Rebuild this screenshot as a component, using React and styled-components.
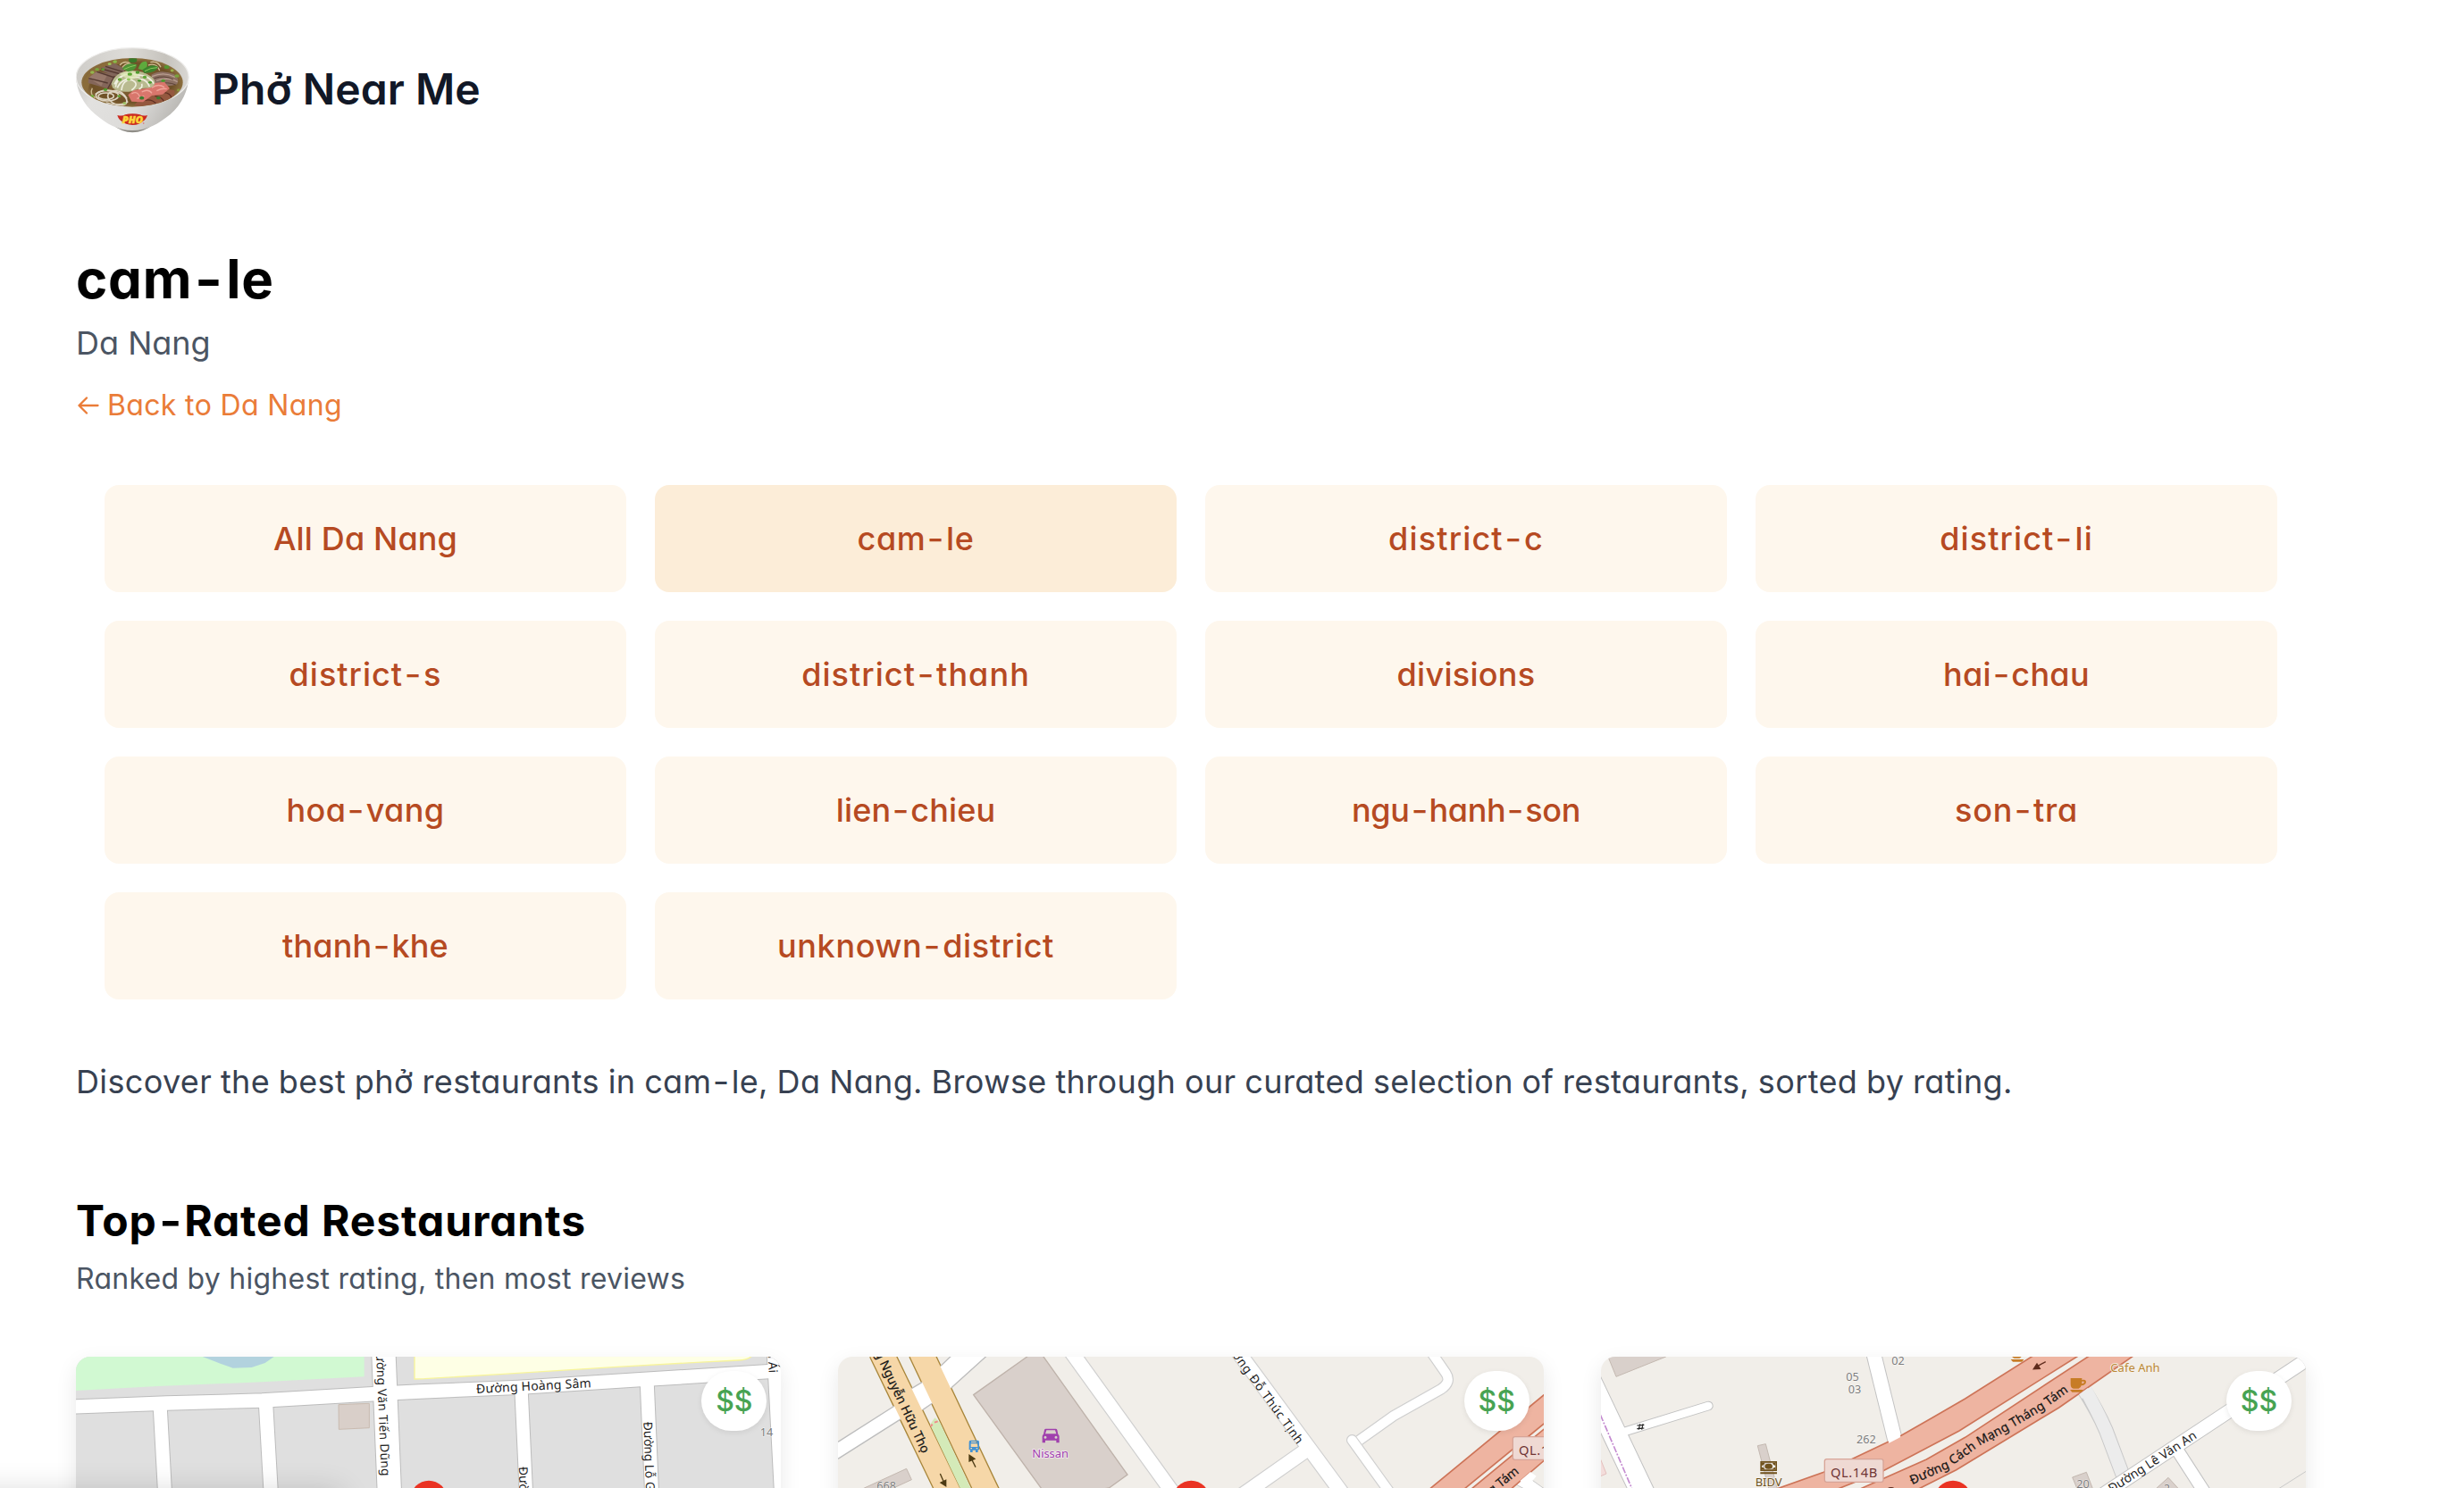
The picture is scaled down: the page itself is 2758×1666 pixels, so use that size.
import React from "react";
import styled, { createGlobalStyle } from "styled-components";

const GlobalStyle = createGlobalStyle`
  *, *::before, *::after { box-sizing: border-box; }
  body {
    margin: 0;
    background: #fff;
    font-family: Inter, "Liberation Sans", sans-serif;
    font-feature-settings: "cv11";
  }
  h1, h2, p { margin: 0; }
  a { color: inherit; text-decoration: none; }
`;

const Page = styled.div`
  position: relative;
  height: 1666px;
  overflow: hidden;
  background: #fff;
`;

const Header = styled.header`
  display: flex;
  align-items: center;
  gap: 24px;
  height: 202px;
  padding: 0 85px;
`;

const BrandName = styled.span`
  padding-bottom: 2px;
  font-size: 48px;
  line-height: 64px;
  font-weight: 600;
  letter-spacing: 0.05px;
  color: #111827;
`;

const Main = styled.main`
  width: 2666px;
  padding: 74px 85px 0;
`;

const PlaceTitle = styled.h1`
  font-size: 60px;
  line-height: 72px;
  font-weight: 700;
  letter-spacing: 0.8px;
  color: #000;
`;

const PlaceCity = styled.p`
  margin-top: 8px;
  font-size: 36px;
  line-height: 56px;
  letter-spacing: 0;
  color: #4b5563;
`;

const BackLink = styled.a`
  display: flex;
  align-items: center;
  gap: 9px;
  width: max-content;
  margin-top: 18px;
  padding-left: 2px;
  font-size: 32px;
  line-height: 48px;
  letter-spacing: 0.35px;
  color: #ea7c38;
`;

const Dash = styled.span`
  display: inline-block;
  padding: 0 0.075em;
  transform: scaleX(1.12);
`;

const DistrictGrid = styled.nav`
  display: grid;
  grid-template-columns: repeat(4, 1fr);
  gap: 32px;
  margin-top: 65px;
  padding: 0 32px;
`;

const DistrictLink = styled.a`
  display: flex;
  align-items: center;
  justify-content: center;
  height: 120px;
  border-radius: 16px;
  background: ${(p) => (p.$active ? "#fcedd8" : "#fef7ed")};
  color: #b64a22;
  font-size: 36px;
  font-weight: 500;
  letter-spacing: ${(p) => p.$track}px;
`;

const Intro = styled.p`
  margin-top: 64px;
  font-size: 36px;
  line-height: 56px;
  letter-spacing: 0.36px;
  word-spacing: -0.7px;
  color: #374151;
  white-space: nowrap;
`;

const SectionTitle = styled.h2`
  margin-top: 96px;
  font-size: 48px;
  line-height: 64px;
  font-weight: 700;
  letter-spacing: 0.88px;
  color: #000;
`;

const SectionNote = styled.p`
  margin-top: 9px;
  font-size: 32px;
  line-height: 48px;
  letter-spacing: 0.26px;
  color: #4b5563;
`;

const CardGrid = styled.div`
  display: grid;
  grid-template-columns: repeat(3, 1fr);
  gap: 64px;
  margin-top: 63px;
`;

const Card = styled.article`
  position: relative;
  height: 384px;
  border-radius: 16px;
  overflow: hidden;
  background: #fff;
  box-shadow: 0 8px 24px rgba(0, 0, 0, 0.09);
`;

const MapSvg = styled.svg`
  display: block;
  width: 100%;
  height: 100%;
  font-family: "Noto Sans", sans-serif;
  font-size: 42px;
  .label { fill: #222; stroke: rgba(255, 255, 255, 0.5); stroke-width: 4px; paint-order: stroke; }
  .onroad { fill: #161616; stroke: #161616; stroke-width: 0.7px; }
  .num { fill: #7c7c7c; font-size: 38px; paint-order: stroke; stroke: rgba(255, 255, 255, 0.7); stroke-width: 3px; }
`;

const PriceBadge = styled.span`
  position: absolute;
  top: 16px;
  right: 16px;
  display: flex;
  align-items: center;
  justify-content: center;
  width: 73px;
  height: 67px;
  border-radius: 34px;
  background: #fff;
  color: #47a352;
  font-size: 32px;
  font-weight: 500;
  box-shadow: 0 2px 6px rgba(0, 0, 0, 0.08);
`;

const CornerShade = styled.div`
  position: absolute;
  left: -60px;
  bottom: -46px;
  width: 440px;
  height: 40px;
  box-shadow: 0 0 34px 2px rgba(0, 0, 0, 0.16);
`;

const Scallion = ({ points }) =>
  points.map(([x, y, r, fill], i) => (
    <ellipse key={i} cx={x} cy={y} rx={r} ry={r * 0.7} fill={fill || "#4f9a2f"} />
  ));

const BowlLogo = () => (
  <svg width="128" height="96" viewBox="75 68 384 288">
    <defs>
      <linearGradient id="bowlSide" x1="0" y1="0" x2="1" y2="0.3">
        <stop offset="0" stopColor="#c9c8c5" />
        <stop offset="0.25" stopColor="#e2e1df" />
        <stop offset="0.65" stopColor="#dddcda" />
        <stop offset="1" stopColor="#bab8b4" />
      </linearGradient>
      <linearGradient id="bowlRim" x1="0" y1="0" x2="1" y2="0">
        <stop offset="0" stopColor="#cfcdc9" />
        <stop offset="0.45" stopColor="#dddbd7" />
        <stop offset="0.8" stopColor="#c6c3bd" />
        <stop offset="1" stopColor="#d9d7d3" />
      </linearGradient>
      <radialGradient id="broth">
        <stop offset="0" stopColor="#8a6a3a" />
        <stop offset="0.8" stopColor="#6e5027" />
        <stop offset="1" stopColor="#8d7040" />
      </radialGradient>
      <clipPath id="soup">
        <ellipse cx="264" cy="186" rx="168" ry="81" />
      </clipPath>
    </defs>
    <path d="M194 325 Q230 354 265 354 Q300 354 338 325Z" fill="#8f8d87" />
    <path d="M75 166 C77 212 98 258 140 293 C178 325 215 347 265 347 C315 347 352 325 392 293 C432 258 452 212 454 166Z" fill="url(#bowlSide)" />
    <ellipse cx="264.500" cy="168" rx="189" ry="98" fill="url(#bowlRim)" stroke="#eeedeb" strokeWidth="4" />
    <ellipse cx="264" cy="186" rx="170" ry="82" fill="url(#broth)" />
    <g clipPath="url(#soup)">
      <path d="M95 200 Q110 130 220 108 L320 106 Q250 120 190 128 Q120 150 112 230Z" fill="#8a6c3a" />
      <g fill="none" stroke="#cdbb92" strokeWidth="4">
        <path d="M222 128 Q240 108 262 126 M230 136 Q248 112 270 132 M325 118 Q350 112 360 135 M318 128 Q345 118 356 146 M130 205 Q120 225 140 238" />
      </g>
      <path d="M160 136 L205 122 L238 140 L236 158 L205 165 L160 146Z" fill="#80655a" />
      <path d="M118 170 L145 148 L205 160 L212 178 L180 206 L116 188Z" fill="#84665a" />
      <path d="M118 170 L145 150 L180 162 L160 198Z" fill="#98796b" />
      <g stroke="#553a31" strokeWidth="4" fill="none">
        <path d="M145 150 L206 170 M160 140 L226 158 M118 172 L182 188 M174 132 L232 150 M205 164 L182 206" />
      </g>
      <path d="M328 160 Q360 140 404 158 Q425 172 415 192 Q380 205 335 190Z" fill="#8d7063" />
      <path d="M330 166 Q370 148 408 168 M345 180 Q385 166 416 184" stroke="#b99f90" strokeWidth="4" fill="none" />
      <path d="M338 172 Q372 160 402 176 M350 192 Q385 182 410 194" stroke="#5c4238" strokeWidth="3" fill="none" />
      <path d="M290 240 Q350 200 405 212 Q415 240 370 256 Q310 272 270 264Z" fill="#94583f" />
      <path d="M305 246 Q330 240 345 258 M340 232 Q362 232 372 252 M372 220 Q392 222 396 238" stroke="#5f2f22" strokeWidth="4" fill="none" />
      <g fill="none" stroke="#ddd4c2" strokeWidth="5">
        <ellipse cx="180" cy="230" rx="38" ry="18" />
        <ellipse cx="176" cy="232" rx="26" ry="11" />
        <ellipse cx="214" cy="240" rx="34" ry="20" transform="rotate(24 214 240)" />
        <path d="M190 218 Q222 202 246 240 M140 226 Q172 202 214 222 M176 254 Q226 268 250 250" />
      </g>
      <path d="M250 228 L268 212 L310 206 L338 188 L372 184 L390 206 L366 226 L330 230 L300 252 L262 250Z" fill="#d8766c" />
      <g stroke="#efa69b" strokeWidth="4" fill="none">
        <path d="M262 224 Q282 212 290 236 M296 218 Q318 206 330 222 M330 204 Q350 188 372 202 M346 214 Q366 204 380 208 M280 240 L304 232" />
      </g>
      <path d="M194 190 Q206 152 252 146 Q300 144 330 168 Q352 190 326 204 Q280 206 262 216 Q220 222 198 204Z" fill="#b9ba90" />
      <g fill="none" stroke="#efefdf" strokeWidth="5">
        <path d="M204 192 Q222 152 274 158 M214 204 Q230 166 290 168 M228 212 Q232 174 264 178 Q290 190 262 212 M270 160 Q320 160 336 190 M286 176 Q312 172 322 200 M240 158 Q210 176 208 202 M296 190 Q300 204 286 208" />
      </g>
      <path d="M222 158 Q250 140 290 152 Q280 176 250 176Z" fill="#e0eab8" opacity="0.75" />
      <path d="M230 140 Q246 116 280 126 Q276 148 250 150Z" fill="#4e9436" />
      <path d="M284 140 Q292 112 312 116 Q320 132 304 146Z" fill="#5eaa3d" />
      <path d="M298 144 Q330 120 352 134 Q340 156 304 154Z" fill="#3c842d" />
      <path d="M236 142 Q256 132 276 128 M306 148 Q326 136 348 136" stroke="#8cc65d" strokeWidth="3" fill="none" />
      <Scallion
        points={[
          [256, 158, 8, "#5ca732"], [282, 152, 7], [306, 168, 7, "#5fa837"], [288, 180, 6], [252, 176, 6, "#91c65a"],
          [222, 176, 7, "#69a83a"], [324, 186, 6], [266, 110, 14, "#39782a"], [206, 116, 7, "#8abb4a"], [188, 124, 6, "#9cc65c"],
          [380, 134, 9, "#55952f"], [398, 146, 6, "#9ab04c"], [414, 164, 8, "#7aa23d"], [130, 152, 7, "#94b54e"], [146, 142, 7, "#7aa23d"],
          [174, 210, 7, "#4f9a2f"], [130, 232, 6, "#6cae36"], [296, 238, 8, "#3c7c2f"], [352, 238, 7, "#3c7c2f"], [368, 180, 7, "#4f9a2f"],
          [420, 212, 6, "#8a9b3c"], [220, 232, 6, "#63a338"], [238, 256, 6, "#9fc567"], [166, 142, 6, "#5d9832"],
        ]}
      />
    </g>
    <path d="M214 296 Q232 300 240 294 Q265 288 290 294 Q300 300 315 296 Q310 312 300 316 Q290 328 265 329 Q240 328 231 318 Q218 312 214 296Z" fill="#cb2a20" />
    <text x="265" y="322" textAnchor="middle" textLength="70" lengthAdjust="spacingAndGlyphs" fontFamily="Open Sans, sans-serif" fontWeight="800" fontStyle="italic" fontSize="31" fill="#fbd53c" stroke="#fbd53c" strokeWidth="1.500">PHO</text>
    <circle cx="302" cy="323" r="2.500" fill="#d66" />
  </svg>
);

const BackArrow = () => (
  <svg width="24" height="20" viewBox="0 0 24 20" fill="none" stroke="currentColor" strokeWidth="2.300" strokeLinecap="round" strokeLinejoin="round">
    <path d="M22.500 10H1.500M10 1.500L1.500 10L10 18.500" />
  </svg>
);

const Pin = ({ x }) => (
  <g>
    <circle cx={x} cy="534" r="61" fill="#ea3323" />
    <circle cx={x} cy="534" r="22" fill="#b31412" />
  </g>
);

const Shield = ({ x, y }) => (
  <g>
    <rect x={x} y={y} width="197" height="77" rx="7" fill="#efd9d3" stroke="#d7a497" strokeWidth="4" />
    <text x={x + 20} y={y + 60} fontSize="44" textLength="157" fill="#703535">QL.14B</text>
  </g>
);

const Cup = ({ x, y }) => (
  <g transform={`translate(${x} ${y})`} fill="#c77c26">
    <path d="M2 0H40V6Q54 3 54 13Q53 24 38 25Q36 33 29 35H12Q2 33 2 20ZM40 11V19Q48 18 47 12Q45 9 40 11Z" fillRule="evenodd" />
    <path d="M0 39H44L38 47H7Z" />
  </g>
);

const streets1 = [
  ["M358 232L374 520V900", 45],
  ["M713 222L730 520V900", 46],
  ["M1108 40L1127 498L1145 900", 79],
  ["M1571 178L1586 498L1600 900", 43],
  ["M1993 150L2008 498L2020 900", 45],
  ["M2432 40L2456 498L2480 900", 72],
  ["M40 226L380 213L700 204L1110 180L1230 174L1560 160L1970 134L2400 107L2480 102", 46],
];

const MapHoangSam = () => (
  <MapSvg viewBox="75 57 2368 1152" preserveAspectRatio="xMinYMin slice">
    <rect x="60" y="40" width="2400" height="1200" fill="#dfdfdf" />
    <path d="M60 40H1043V124L700 142L350 156L60 172Z" fill="#d1f9d2" />
    <path d="M500 57L560 80L602 95L665 93L710 78L740 57V40H500Z" fill="#b2d2de" />
    <path d="M1212 40V132L1245 131L1500 116L1880 92L2160 76L2300 69Q2330 67 2342 57V40Z" fill="#feffe5" stroke="#f8f59b" strokeWidth="4" />
    <path d="M957 218L1060 214V296L958 301Z" fill="#d9cfc9" stroke="#c9bbb0" strokeWidth="3" />
    {streets1.map(([d, w]) => (
      <path key={d} d={d} fill="none" stroke="#bcbcbc" strokeWidth={w + 6} />
    ))}
    {streets1.map(([d, w]) => (
      <path key={d} d={d} fill="none" stroke="#fff" strokeWidth={w} />
    ))}
    <text className="label" transform="translate(1101 458) rotate(87.500)" textAnchor="end" fontSize="41" textLength="442">Đường Văn Tiến Dũng</text>
    <text className="label" transform="translate(1420 180) rotate(-3)" textLength="386">Đường Hoàng Sâm</text>
    <text className="label" transform="translate(1981 276) rotate(88)" fontSize="41">Đường Lỗ Giáng</text>
    <text className="label" transform="translate(1562 427) rotate(88)" fontSize="41">Đường Lỗ Giáng 5</text>
    <text className="label" transform="translate(2402 112) rotate(87)" textAnchor="end" fontSize="41">Nhân Ái</text>
    <text className="num" x="2372" y="324">14</text>
    <Pin x={1260} />
  </MapSvg>
);

const MapNguyenHuuTho = () => (
  <MapSvg viewBox="55 57 2368 1152" preserveAspectRatio="xMinYMin slice">
    <rect x="40" y="40" width="2400" height="1200" fill="#f1eee9" />
    <path d="M510 185L690 57L712 40H733L745 57L1027 453L965 498L760 530Z" fill="#d9d0cb" stroke="#bfb3ab" strokeWidth="4" />
    <path d="M100 518L285 433L302 470L190 522Z" fill="#d9d0cb" stroke="#c3b8b0" strokeWidth="3" />
    {[["#cfcfcf", 54], ["#fff", 47]].map(([stroke, w]) => (
      <g key={w} fill="none" stroke={stroke} strokeWidth={w}>
        <path d="M838 40L1168 498L1450 890" />
        <path d="M1398 40L1735 498L2030 900" />
        <path d="M1630 369L1432 508L1200 670" />
        <path d="M2046 40L2096 112Q2116 142 2080 166L1920 256L1805 338" strokeWidth={w - 16} />
        <path d="M1781 337L1900 502L2000 640" strokeWidth={w - 16} strokeLinecap="round" />
      </g>
    ))}
    <g fill="none">
      <path d="M199 40L420 498L610 890" stroke="#a9873c" strokeWidth="86" />
      <path d="M332 40L549 498L740 890" stroke="#a9873c" strokeWidth="86" />
      <path d="M30 357L245 222L303 163L337 143L400 88L433 57L450 40H570L550 57L435 162L372 213L340 235L268 265L30 416Z" fill="#fff" />
      <path d="M55 343L245 222M303 163L337 143M400 88L450 40M570 40L435 162M372 213L340 235M268 265L55 400" stroke="#bdbdbd" strokeWidth="4" />
      <path d="M199 40L420 498L610 890" stroke="#f6d7a8" strokeWidth="78" />
      <path d="M332 40L549 498L740 890" stroke="#f6d7a8" strokeWidth="78" />
    </g>
    <path d="M364 285L380 262L397 278L500 498H465Z" fill="#d4eab8" />
    <path d="M366 291L372 284M379 278L390 274" stroke="#f08b8b" strokeWidth="6" />
    <g stroke="#4d3b13" strokeWidth="4" fill="#4d3b13">
      <path d="M517 428L504 402" />
      <path d="M496 388L496 408L514 400Z" />
      <path d="M398 450L409 475" />
      <path d="M417 491L400 480L417 472Z" />
    </g>
    <g fill="#4292d4">
      <path d="M499 338H525Q529 338 529 345V370H525V378H517V371H507V378H499V370H495V345Q495 338 499 338ZM501 349V360H524V349ZM500 363V367H505V363ZM519 363V367H524V363ZM502 342V345H522V342Z" fillRule="evenodd" />
    </g>
    <path d="M753 299H786Q790 299 791 303L794 317Q798 320 798 325V346H788V338H751V346H741V325Q741 320 745 317L748 303Q749 299 753 299ZM755 304L751 316H788L784 304ZM751 323A4.500 4.500 0 1 0 751 332A4.500 4.500 0 1 0 751 323ZM787 323A4.500 4.500 0 1 0 787 332A4.500 4.500 0 1 0 787 323Z" fill="#a040ad" fillRule="evenodd" />
    <text x="768" y="395" textAnchor="middle" fontSize="39" textLength="122" fill="#a040ad" stroke="#f3ebf0" strokeWidth="5" paintOrder="stroke">Nissan</text>
    <text className="onroad" transform="translate(338 384) rotate(64.800)" textAnchor="end" textLength="486">Đường Nguyễn Hữu Thọ</text>
    <text className="label" transform="translate(1597 353) rotate(54)" textAnchor="end" textLength="434" fontSize="41">Đường Đỗ Thúc Tịnh</text>
    <text className="num" x="185" y="503">668</text>
    <g fill="none">
      <path d="M2330 485L2367 458L2440 510L2440 545Z" fill="#fff" stroke="#c9c9c9" strokeWidth="3" />
      <path d="M2024 516L2450 165V262L2140 516Z" fill="#eeb4a1" stroke="#cd7458" strokeWidth="5" />
      <path d="M2164 516L2450 280V385L2298 516Z" fill="#eeb4a1" stroke="#cd7458" strokeWidth="5" />
      <path d="M2345 474L2380 444L2400 458L2372 492Z" fill="#fff" />
    </g>
    <Shield x={2321} y={326} />
    <text className="onroad" transform="translate(2344 446) rotate(-39)" textAnchor="end">Đường Cách Mạng Tám</text>
    <Pin x={1241} />
  </MapSvg>
);

const MapCachMang = () => (
  <MapSvg viewBox="37 57 2368 1152" preserveAspectRatio="xMinYMin slice">
    <defs>
      <path id="cachMang" d="M1082 487L1200 434L1315 352L1405 304L1530 230L1612 170L1700 110" />
    </defs>
    <rect x="20" y="40" width="2400" height="1200" fill="#f1eee9" />
    <path d="M54 40L88 124L255 57L280 40Z" fill="#d9d0cb" stroke="#c3b8b0" strokeWidth="3" />
    <path d="M20 370L37 405L55 450L20 465Z" fill="#f3dddb" stroke="#e3bfbd" strokeWidth="3" />
    <path d="M563 356L590 350L632 510H603Z" fill="#d9d0cb" stroke="#c3b8b0" strokeWidth="3" />
    <path d="M1620 462L1667 445L1692 510H1640Z" fill="#d9d0cb" stroke="#c3b8b0" strokeWidth="3" />
    <path d="M1890 510L1942 463L1985 510Z" fill="#d9d0cb" stroke="#c3b8b0" strokeWidth="3" />
    <path d="M1654 160Q1705 240 1733 305L1795 470" fill="none" stroke="#c9c9c9" strokeWidth="50" />
    <path d="M1654 150Q1705 240 1733 305L1795 470" fill="none" stroke="#ececec" strokeWidth="44" />
    <path d="M2310 502L2430 426" stroke="#c9c9c9" strokeWidth="3" />
    {[["#c2c2c2", 0], ["#fff", -6]].map(([stroke, k]) => (
      <g key={k} fill="none" stroke={stroke}>
        <path d="M-50 38L169 498L350 880" strokeWidth={84 + k} />
        <path d="M100 314L398 222" strokeWidth={32 + k} strokeLinecap="round" />
        <path d="M951 40L1030 360" strokeWidth={53 + k} />
        <path d="M1975 375L2062 510" strokeWidth={46 + k} />
        <path d="M1700 535L2430 52" strokeWidth={50 + k} />
      </g>
    ))}
    <path d="M20 218L37 257L140 498L160 545" fill="none" stroke="#c48bd0" strokeWidth="5" strokeDasharray="22 5 6 5" />
    <path d="M158 288L182 286M158 299L182 297M168 283L164 302M178 283L174 302" stroke="#222" strokeWidth="3.500" />
    <g fill="#eeb4a1" stroke="#cd7458" strokeWidth="5">
      <path d="M590 514L785 445L885 398L1002 343L1045 322L1150 262L1260 198L1510 40H1665L1635 57L1240 306L985 440L800 514Z" />
      <path d="M870 518L1010 455L1130 402L1260 328L1680 52L1700 40H1845L1575 228L1230 437L1070 518Z" />
    </g>
    <path d="M1004 347L1043 327L1040 314L1000 334Z" fill="#fff" />
    <path d="M1642 184L1672 162L1682 176L1652 198Z" fill="#ececec" />
    <g stroke="#5e2b1c" strokeWidth="4" fill="#5e2b1c">
      <path d="M1530 74L1504 88" />
      <path d="M1490 98L1501 81L1511 97Z" />
    </g>
    <Cup x={1612} y={129} />
    <Cup x={1413} y={27} />
    <text x="1748" y="108" fontSize="39" textLength="166" fill="#b98837" stroke="#f6f0e8" strokeWidth="5" paintOrder="stroke">Cafe Anh</text>
    <path d="M572 408H628V441H572ZM577 413V436H623V413ZM572 445H628V451H572Z" fillRule="evenodd" fill="#70521d" />
    <path d="M577 413H587Q586 421 577 422ZM623 413H613Q614 421 623 422ZM577 436H587Q586 429 577 428ZM623 436H613Q614 429 623 428Z" fill="#70521d" />
    <ellipse cx="600" cy="425" rx="13" ry="9" fill="#70521d" />
    <text x="600" y="493" textAnchor="middle" fontSize="39" textLength="90" fill="#70521d" stroke="#f6f3ee" strokeWidth="5" paintOrder="stroke">BIDV</text>
    <text className="num" x="860" y="137">05</text>
    <text className="num" x="867" y="181">03</text>
    <text className="num" x="1013" y="84">02</text>
    <text className="num" x="895" y="349">262</text>
    <text className="num" x="1634" y="498">20</text>
    <text className="num" x="1926" y="512">2</text>
    <Shield x={788} y={401} />
    <text className="onroad">
      <textPath href="#cachMang" textLength="614">Đường Cách Mạng Tháng Tám</textPath>
    </text>
    <text className="label" transform="translate(1752 516) rotate(-33)" textLength="344">Đường Lê Văn An</text>
    <ellipse cx="1011" cy="500" rx="11" ry="5" fill="#5e2b1c" />
    <Pin x={1219} />
  </MapSvg>
);

const districts = [
  { name: "All Da Nang", track: 0.15 },
  { name: "cam-le", track: 0.6 },
  { name: "district-c", track: 1.15 },
  { name: "district-li", track: 1.1 },
  { name: "district-s", track: 1 },
  { name: "district-thanh", track: 1.05 },
  { name: "divisions", track: 0.3 },
  { name: "hai-chau", track: 0.3 },
  { name: "hoa-vang", track: 0.4 },
  { name: "lien-chieu", track: 0.1 },
  { name: "ngu-hanh-son", track: -0.3 },
  { name: "son-tra", track: 0.75 },
  { name: "thanh-khe", track: 0.15 },
  { name: "unknown-district", track: 0.68 },
];

const restaurants = [
  { id: "hoang-sam", Map: MapHoangSam, price: "$$" },
  { id: "huu-tho", Map: MapNguyenHuuTho, price: "$$" },
  { id: "cach-mang", Map: MapCachMang, price: "$$" },
];

const Dashed = ({ children }) => (
  <span>
    {children.split("-").map((part, i) => (
      <React.Fragment key={i}>
        {i > 0 && <Dash>-</Dash>}
        {part}
      </React.Fragment>
    ))}
  </span>
);

export default function App() {
  return (
    <Page>
      <GlobalStyle />
      <Header>
        <BowlLogo />
        <BrandName>Phở Near Me</BrandName>
      </Header>
      <Main>
        <PlaceTitle><Dashed>cam-le</Dashed></PlaceTitle>
        <PlaceCity>Da Nang</PlaceCity>
        <BackLink href="#">
          <BackArrow />
          Back to Da Nang
        </BackLink>
        <DistrictGrid>
          {districts.map(({ name, track }) => (
            <DistrictLink key={name} href="#" $active={name === "cam-le"} $track={track}>
              <Dashed>{name}</Dashed>
            </DistrictLink>
          ))}
        </DistrictGrid>
        <Intro>
          <Dashed>
            Discover the best phở restaurants in cam-le, Da Nang. Browse through our curated selection of restaurants, sorted by rating.
          </Dashed>
        </Intro>
        <SectionTitle><Dashed>Top-Rated Restaurants</Dashed></SectionTitle>
        <SectionNote>Ranked by highest rating, then most reviews</SectionNote>
        <CardGrid>
          {restaurants.map(({ id, Map, price }) => (
            <Card key={id}>
              <Map />
              <PriceBadge>{price}</PriceBadge>
            </Card>
          ))}
        </CardGrid>
      </Main>
      <CornerShade />
    </Page>
  );
}
